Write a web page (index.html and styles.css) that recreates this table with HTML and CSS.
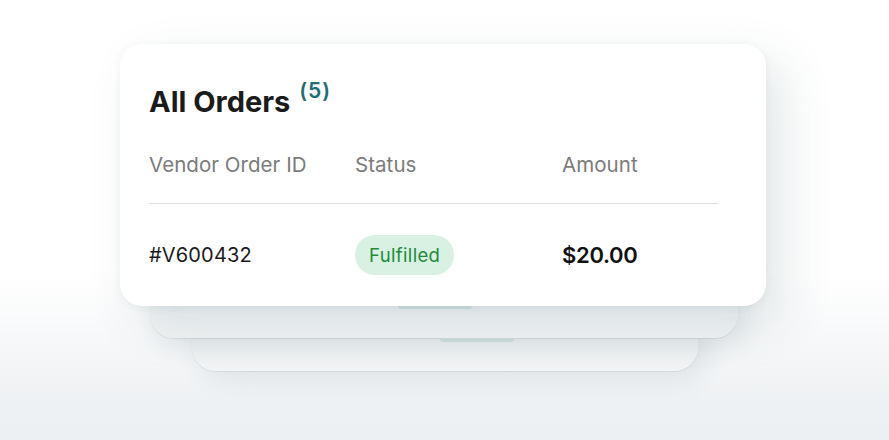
FILE: index.html
```html
<!DOCTYPE html>
<html lang="en">
  <head>
    <title>All Orders</title>
    <meta charset="UTF-8" />
    <meta name="viewport" content="width=device-width, initial-scale=1.0" />
    <link rel="stylesheet" href="styles.css">
  </head>
  <body>
    <div class="stage">
      <div class="stack">
        <div class="card-back back-far"><span class="ghost-pill"></span></div>
        <div class="card-back back-near"><span class="ghost-pill"></span></div>

        <div class="orders-card">
          <h1 class="title">All Orders <sup class="count">(5)</sup></h1>
          <div class="orders-row orders-head">
            <span>Vendor Order ID</span>
            <span>Status</span>
            <span>Amount</span>
          </div>
          <div class="orders-row orders-item">
            <span class="order-id">#V600432</span>
            <span><span class="pill">Fulfilled</span></span>
            <span class="amount">$20.00</span>
          </div>
        </div>
      </div>
    </div>
  </body>
</html>
```

FILE: styles.css
```css
body {
  margin: 0;
  padding: 0;
  height: 440px;
  overflow: hidden;
  font-family: Inter, "Noto Sans", sans-serif;
  background: linear-gradient(180deg, #ffffff 0%, #ffffff 62%, #eef1f3 92%, #ecf0f2 100%);
}

.stage {
  padding: 44px 0 0 120px;
}

.stack {
  position: relative;
  width: 646px;
}

.orders-card {
  position: relative;
  z-index: 3;
  background-color: #ffffff;
  border-radius: 22px;
  padding: 40px 48px 31px 29px;
  box-shadow: 18px 18px 50px rgba(40, 75, 85, 0.13), 0 2px 8px rgba(40, 75, 85, 0.06);
}

.card-back {
  position: absolute;
  border-radius: 24px;
  background: linear-gradient(180deg, #e6ecee 0%, #f1f4f5 55%, #f2f4f5 100%);
  box-shadow: 8px 10px 24px rgba(40, 75, 85, 0.09), 0 1px 1px rgba(40, 75, 85, 0.1);
}

.back-near {
  z-index: 2;
  left: 30px;
  right: 28px;
  top: 80px;
  bottom: -32px;
}

.back-far {
  z-index: 1;
  left: 72px;
  right: 68px;
  top: 120px;
  bottom: -65px;
}

.ghost-pill {
  position: absolute;
  left: 248px;
  bottom: 29px;
  width: 74px;
  height: 3px;
  border-radius: 0 0 10px 10px;
  background-color: #d6e7e3;
}

.title {
  margin: 0;
  font-size: 29px;
  line-height: 36px;
  font-weight: 700;
  color: #1b1b1b;
  letter-spacing: 0;
}

.count {
  font-size: 21px;
  font-weight: 600;
  color: #1f6e76;
  vertical-align: 14px;
  line-height: 0;
  letter-spacing: 1px;
  margin-left: 2px;
}

.orders-row {
  display: grid;
  grid-template-columns: 206px 207px 1fr;
  align-items: center;
}

.orders-head {
  margin-top: 33px;
  padding-bottom: 26px;
  border-bottom: 1px solid #dedede;
  font-size: 20.5px;
  line-height: 24px;
  letter-spacing: 0.05px;
  color: #7b7b7b;
}

.orders-item {
  padding-top: 31px;
  height: 40px;
  font-size: 20px;
  color: #1a1a1a;
}

.order-id {
  letter-spacing: 0.2px;
}

.pill {
  display: inline-block;
  height: 40px;
  line-height: 40px;
  padding: 0 14px;
  border-radius: 20px;
  background-color: #d8f1e3;
  color: #1f8a3b;
  font-size: 18.5px;
  letter-spacing: 0.35px;
}

.amount {
  font-size: 22px;
  font-weight: 600;
  color: #111111;
  letter-spacing: -0.3px;
}
```
